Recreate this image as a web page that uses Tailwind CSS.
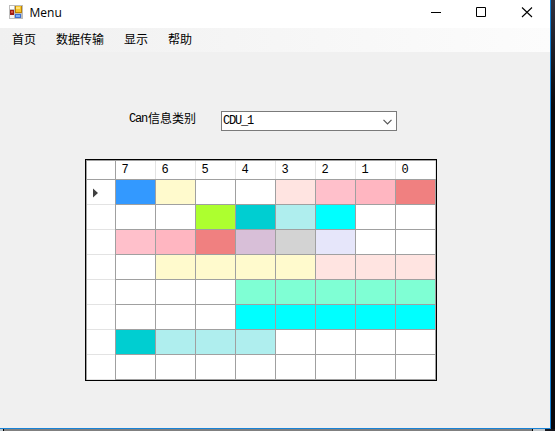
<!DOCTYPE html>
<html lang="zh-CN">
<head>
<meta charset="utf-8">
<title>Menu</title>
<script src="https://cdn.jsdelivr.net/npm/@tailwindcss/browser@4"></script>
</head>
<body class="w-[555px] h-[431px] overflow-hidden flex flex-col bg-[#15161d] text-black text-[12px] font-['Open_Sans','Noto_Sans_CJK_SC',sans-serif]">
<div class="flex h-[429px] bg-linear-to-b from-[#303140] via-[#08080c] via-25% to-[#08080c]">
<main class="w-[551px] h-[429px] shrink-0 flex flex-col bg-[#f0f0f0] border-r border-b border-[#1883d7]">
  <header class="h-[28px] shrink-0 bg-white flex items-start">
    <svg class="ml-[9px] mt-[5px] shrink-0" width="14" height="14" shape-rendering="crispEdges">
      <rect width="14" height="14" fill="#bdbdbd"/>
      <rect x="1" y="1" width="4" height="3" fill="#fff"/><rect x="1" y="10" width="4" height="3" fill="#f4f4f4"/>
      <rect x="1" y="5" width="4" height="5" fill="#9e1c14"/><rect x="2" y="6" width="2" height="2" fill="#d9543f"/>
      <rect x="6" y="1" width="7" height="7" fill="#b98208"/><rect x="7" y="1" width="5" height="6" fill="#f6c42c"/><rect x="7" y="2" width="4" height="2" fill="#ffe27a"/>
      <rect x="6" y="9" width="6" height="4" fill="#3b6fd0"/><rect x="7" y="10" width="4" height="2" fill="#7fb0f8"/>
    </svg>
    <span class="ml-[6.5px] mt-[4px] leading-[18px] text-[12px]">Menu</span>
    <svg class="ml-auto mr-[17px] mt-[7px]" width="102" height="11" fill="none" stroke="#000">
      <path d="M0 5.5h10"/><path d="M45.5.5h9v9h-9z"/><path d="M91 .5l10 9.5M101 .5L91 10" stroke-width="1.1"/>
    </svg>
  </header>
  <nav class="h-[24px] shrink-0 bg-linear-to-r from-[#f0f0f0] to-[#fcfcfc] flex gap-[20px] pl-[12px] leading-[22px] font-['Noto_Sans_CJK_SC',sans-serif]">
    <span>首页</span><span>数据传输</span><span>显示</span><span>帮助</span>
  </nav>
  <section class="mt-[59px] h-[20px] shrink-0 flex items-start pl-[129px] font-['Liberation_Mono','Noto_Sans_CJK_SC',monospace]">
    <label class="w-[92px] flex leading-[14px]"><span class="tracking-[-1.2px] w-[19px] leading-[16px]">Can</span><span class="font-['Noto_Sans_CJK_SC',sans-serif]">信息类别</span></label>
    <div class="w-[176px] h-[20px] border border-[#7a7a7a] bg-white flex items-center justify-between pl-[1px] pr-[4px] tracking-[-1.2px]">
      <span class="leading-[18px]">CDU_1</span>
      <svg class="mt-[2px]" width="9" height="6" fill="none" stroke="#555" stroke-width="1.2"><path d="M.5.8l4 4 4-4"/></svg>
    </div>
  </section>
  <section id="grid" class="ml-[85px] mt-[28px] w-[352px] h-[222px] shrink-0 border border-black bg-white flex flex-col"></section>
</main>
</div>
<footer class="h-[2px] flex"><i class="w-[3px] bg-[#b8c4cc]"></i><i class="w-px bg-black"></i><i class="w-[528px] bg-[#808080]"></i><i class="w-px bg-black"></i><i class="w-[12px] bg-[#c0c6ca]"></i></footer>
<script>
const heads = [7,6,5,4,3,2,1,0];
const rows = [
  ['#3399ff','#fffacd','','','#ffe4e1','#ffc0cb','#ffb6c1','#f08080'],
  ['','','#adff2f','#00ced1','#afeeee','#00ffff','',''],
  ['#ffc0cb','#ffb6c1','#f08080','#d8bfd8','#d3d3d3','#e6e6fa','',''],
  ['','#fffacd','#fffacd','#fffacd','#fffacd','#ffe4e1','#ffe4e1','#ffe4e1'],
  ['','','','#7fffd4','#7fffd4','#7fffd4','#7fffd4','#7fffd4'],
  ['','','','#00ffff','#00ffff','#00ffff','#00ffff','#00ffff'],
  ['#00ced1','#afeeee','#afeeee','#afeeee','','','',''],
  ['','','','','','','','']
];
let html = '<div class="flex h-[20px] border-t border-b border-[#a0a0a0]"><div class="w-[30px] border-l border-r border-[#a0a0a0]"></div>';
heads.forEach(n => html += `<div class="w-[40px] border-r border-[#e3e3e3] pl-[5.5px] leading-[19px] text-[12px] font-['Liberation_Mono',monospace]">${n}</div>`);
html += '</div>';
rows.forEach((r, i) => {
  html += `<div class="flex h-[25px]"><div class="w-[30px] border-l border-r border-[#a0a0a0] flex"><div class="flex-1 border-b border-[#e3e3e3] flex items-center pl-[6px] pt-[2px]">${i === 0 ? '<svg width="5" height="10"><path d="M0 .5v9L5 5z" fill="#404040"/></svg>' : ''}</div></div>`;
  r.forEach(c => html += `<div class="w-[40px] border-r border-b border-[#a0a0a0]" style="background:${c || '#fff'}"></div>`);
  html += '</div>';
});
document.getElementById('grid').innerHTML = html;
</script>
</body>
</html>
